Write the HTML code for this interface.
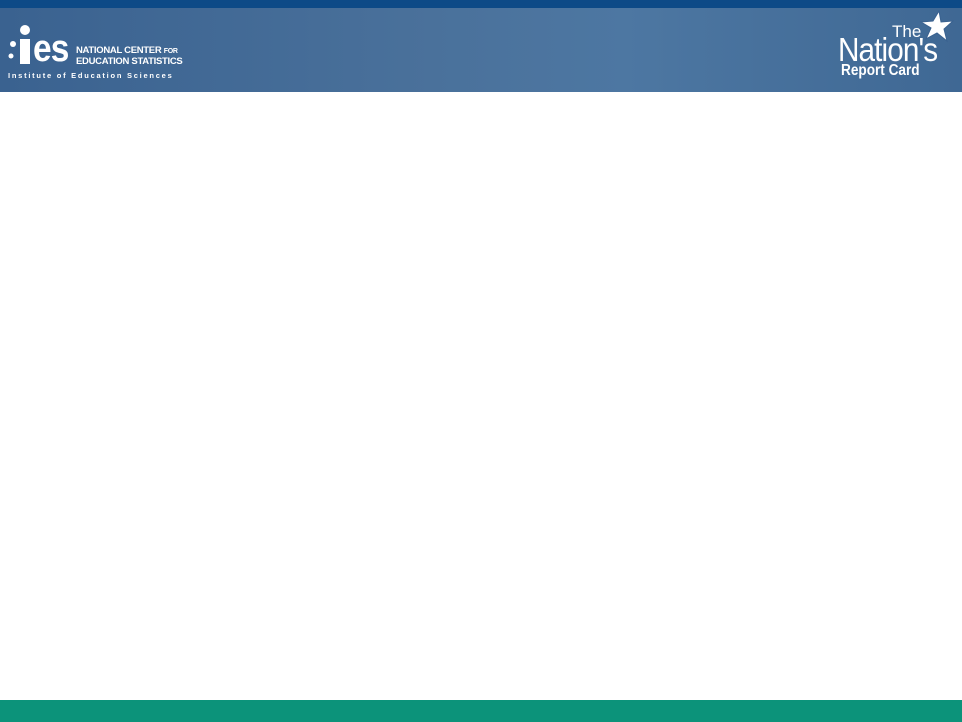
<!DOCTYPE html>
<html><head><style>
body{margin:0;width:962px;height:722px;position:relative;background:#fff;overflow:hidden;font-family:"Liberation Sans",sans-serif}
.top{position:absolute;left:0;top:0;width:962px;height:8px;background:#0d4a87}
.hdr{position:absolute;left:0;top:8px;width:962px;height:84px;background:linear-gradient(90deg,#3a6290 0%,#4a719b 45%,#4d77a2 65%,#3f6894 100%)}
.ft{position:absolute;left:0;top:700px;width:962px;height:22px;background:#0c937a}
.w{position:absolute;color:#fff}
</style></head><body>
<div class="top"></div>
<div class="hdr"></div>
<svg class="w" style="left:0;top:0" width="200" height="92">
<circle cx="25" cy="30" r="5" fill="#fff"/>
<circle cx="13" cy="44" r="3" fill="#fff"/>
<circle cx="11" cy="56" r="2.5" fill="#fff"/>
<rect x="20" y="39" width="10" height="25" fill="#fff"/>
</svg>
<div class="w" style="left:33px;top:30px;font-size:38px;font-weight:bold;letter-spacing:-1px;line-height:38px;transform:scaleX(0.88);transform-origin:left">es</div>
<div class="w" style="left:76px;top:46px;font-size:9.5px;font-weight:bold;line-height:10px;letter-spacing:-0.3px">NATIONAL CENTER <span style="font-size:7px">FOR</span><br>EDUCATION STATISTICS</div>
<div class="w" style="left:8px;top:71px;font-size:7.5px;font-weight:bold;letter-spacing:1.75px">Institute of Education Sciences</div>
<div class="w" style="left:892px;top:22px;font-size:17px">The</div>
<div class="w" style="left:838px;top:31px;font-size:33px;letter-spacing:-1px;transform:scaleX(0.9);transform-origin:left">Nation's</div>
<div class="w" style="left:841px;top:62px;font-size:16px;font-weight:bold;transform:scaleX(0.85);transform-origin:left">Report Card</div>
<svg class="w" style="left:913px;top:8px" width="42" height="38"><polygon points="26,3 28,14 40,13 31,21 34,33 24,25 13,31 18,20 8,14 20,13" fill="#fff" stroke="#3a6290" stroke-width="1"/></svg>
<div class="ft"></div>
</body></html>
